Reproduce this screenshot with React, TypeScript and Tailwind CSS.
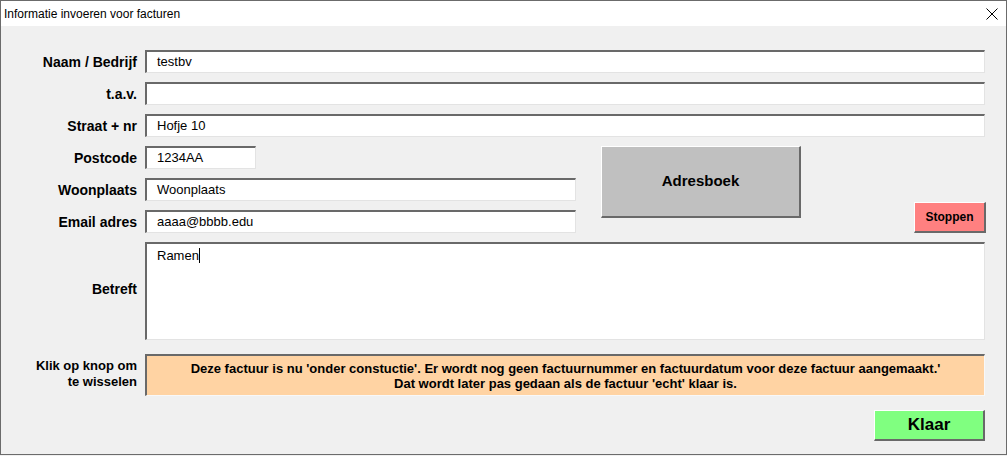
import React from 'react'

const font = "font-['Liberation_Sans',Arial,sans-serif]"
const sunken = 'border-t-2 border-l-2 border-b border-r border-t-[#696969] border-l-[#696969] border-b-[#e3e3e3] border-r-[#e3e3e3] bg-white'
const raised = 'border-t border-l border-b-2 border-r-2 border-t-white border-l-white border-b-[#696969] border-r-[#696969]'

function Label({ children, size = 'text-[14px]' }: { children: React.ReactNode; size?: string }) {
  return <div className={`w-[136px] shrink-0 text-right ${size} font-bold text-black leading-[16px]`}>{children}</div>
}

function Field({ value, className = 'flex-1' }: { value?: string; className?: string }) {
  return (
    <div className={`${sunken} ${className} h-[23px] flex items-center pl-[10px] text-[13px] text-black`}>
      {value}
    </div>
  )
}

function Row({ label, value, width }: { label: string; value?: string; width?: string }) {
  return (
    <div className="flex items-center gap-[8px]">
      <Label>{label}</Label>
      <Field value={value} className={width ?? 'flex-1'} />
    </div>
  )
}

export default function App() {
  return (
    <div className={`${font} w-[1007px] h-[456px] bg-[#f0f0f0]`}>
      <div className="w-[1007px] h-[455px] border border-[#6b6b6b] flex flex-col bg-[#f0f0f0]">
        {/* TITLE BAR */}
        <div className="h-[25px] shrink-0 bg-white flex items-center justify-between pl-[3px] pr-[8px]">
          <span className="text-[12px] text-black">Informatie invoeren voor facturen</span>
          <svg width="12" height="12" viewBox="0 0 12 12" className="mt-[1px]">
            <path d="M0.5 0.5 L11.5 11.5 M11.5 0.5 L0.5 11.5" stroke="#000" strokeWidth="1" fill="none" />
          </svg>
        </div>

        {/* BODY */}
        <div className="flex-1 flex flex-col pt-[24px] pr-[21px]">
          <div className="flex flex-col gap-[9px]">
            <Row label="Naam / Bedrijf" value="testbv" />
            <Row label="t.a.v." />
            <Row label="Straat + nr" value="Hofje 10" />
          </div>

          <div className="flex mt-[9px]">
            <div className="flex flex-col gap-[9px]">
              <Row label="Postcode" value="1234AA" width="w-[111px]" />
              <Row label="Woonplaats" value="Woonplaats" width="w-[431px]" />
              <Row label="Email adres" value="aaaa@bbbb.edu" width="w-[431px]" />
            </div>
            <button className={`${raised} ml-[25px] w-[200px] h-[72px] bg-[#c0c0c0] text-[15px] font-bold text-black`}>
              Adresboek
            </button>
            <button className={`${raised} ml-auto mr-[-1px] self-end w-[72px] h-[31px] bg-[#ff8080] text-[12px] font-bold text-black`}>
              Stoppen
            </button>
          </div>

          <div className="flex items-center gap-[8px] mt-[9px]">
            <div className="pb-[4px]">
              <Label>Betreft</Label>
            </div>
            <div className={`${sunken} flex-1 h-[98px] pl-[10px] pt-[4px] text-[13px] text-black leading-[16px]`}>
              <span>Ramen</span>
              <span className="inline-block w-[1px] h-[15px] bg-black align-[-3px]" />
            </div>
          </div>

          <div className="flex gap-[8px] mt-[14px]">
            <div className="pt-[4px]">
              <Label size="text-[13px]">
                Klik op knop om
                <br />
                te wisselen
              </Label>
            </div>
            <div className="flex-1 h-[42px] border-t-2 border-l-2 border-b border-r border-t-[#696969] border-l-[#696969] border-b-[#f8f8f8] border-r-[#f8f8f8] bg-[#ffd3a3] pt-[5px] text-center text-[13px] font-bold text-black leading-[15px]">
              Deze factuur is nu 'onder constuctie'. Er wordt nog geen factuurnummer en factuurdatum voor deze factuur aangemaakt.'
              <br />
              Dat wordt later pas gedaan als de factuur 'echt' klaar is.
            </div>
          </div>

          <div className="flex justify-end mt-[14px]">
            <button className={`${raised} w-[111px] h-[31px] bg-[#80ff80] text-[17px] font-bold text-black`}>
              Klaar
            </button>
          </div>
        </div>
      </div>
    </div>
  )
}
